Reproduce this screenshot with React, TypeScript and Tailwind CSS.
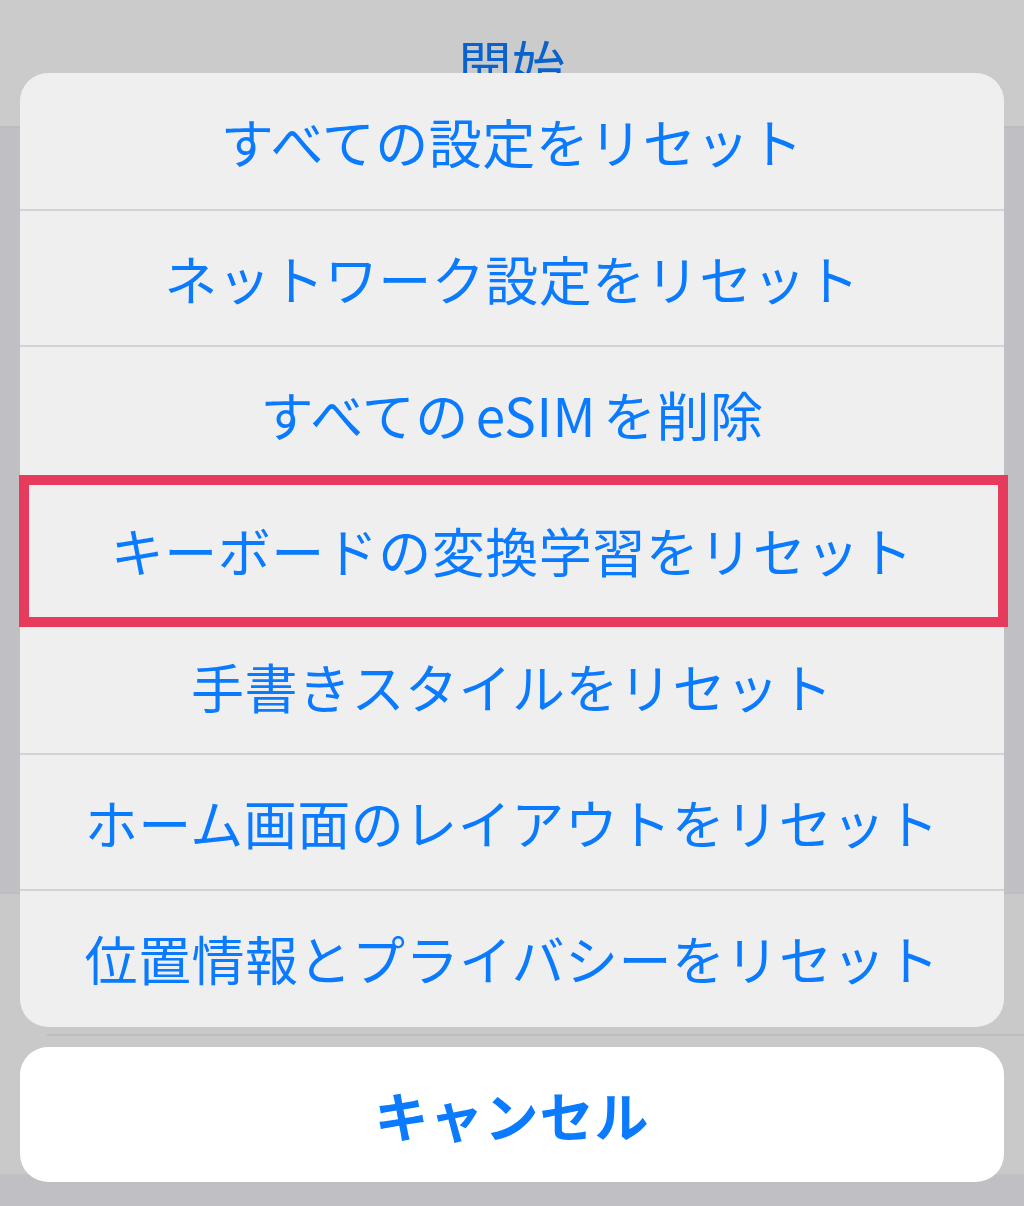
import React from 'react';

const actions: React.ReactNode[] = [
    'すべての設定をリセット',
    'ネットワーク設定をリセット',
    <>すべての<span className="mx-[7px]">eSIM</span>を削除</>,
    'キーボードの変換学習をリセット',
    '手書きスタイルをリセット',
    'ホーム画面のレイアウトをリセット',
    '位置情報とプライバシーをリセット',
];

const font = { fontFamily: '"Noto Sans CJK JP", "Noto Sans", sans-serif' };

export default function App() {
    return (
        <div className="relative w-[1024px] h-[1206px] overflow-hidden bg-[#c0c0c4]" style={font}>
            {/* Dimmed settings page behind the sheet */}
            <div className="h-[128px] bg-[#cbcbcb] border-b-2 border-[#bdbdbf] flex items-center justify-center">
                <span className="text-[53px] leading-none text-[#0a63cc] tracking-[0.5px]">開始</span>
            </div>
            <div className="h-[765px]" />
            <div className="bg-[#c9c9c9] border-t border-[#bcbcbe]">
                <div className="h-[140px]" />
                <div className="ml-[47px] border-t-2 border-[#bdbdbd]" />
                <div className="h-[138px]" />
            </div>

            {/* Action sheet */}
            <div className="absolute left-[20px] top-[73px] w-[984px] flex flex-col gap-[20px]">
                <div className="bg-[#efeff0] rounded-[28px] overflow-hidden flex flex-col">
                    {actions.map((label, i) => (
                        <div
                            key={i}
                            className={`flex items-center justify-center ${i === 0 ? 'h-[136px]' : 'h-[136px] border-t-2 border-[#d2d2d4]'} ${i === actions.length - 1 ? 'pb-[2px] h-[138px]' : ''}`}
                        >
                            <span className="text-[53px] leading-none tracking-[0.5px] text-[#0a7aff]">{label}</span>
                        </div>
                    ))}
                </div>
                <div className="h-[135px] bg-white rounded-[28px] flex items-center justify-center">
                    <span className="text-[54px] leading-none font-bold tracking-[1px] text-[#0a7aff]">キャンセル</span>
                </div>
            </div>

            {/* Highlight annotation */}
            <div className="absolute left-[19px] top-[475px] w-[989px] h-[152px] border-[10px] border-[#e63b5c]" />
        </div>
    );
}
